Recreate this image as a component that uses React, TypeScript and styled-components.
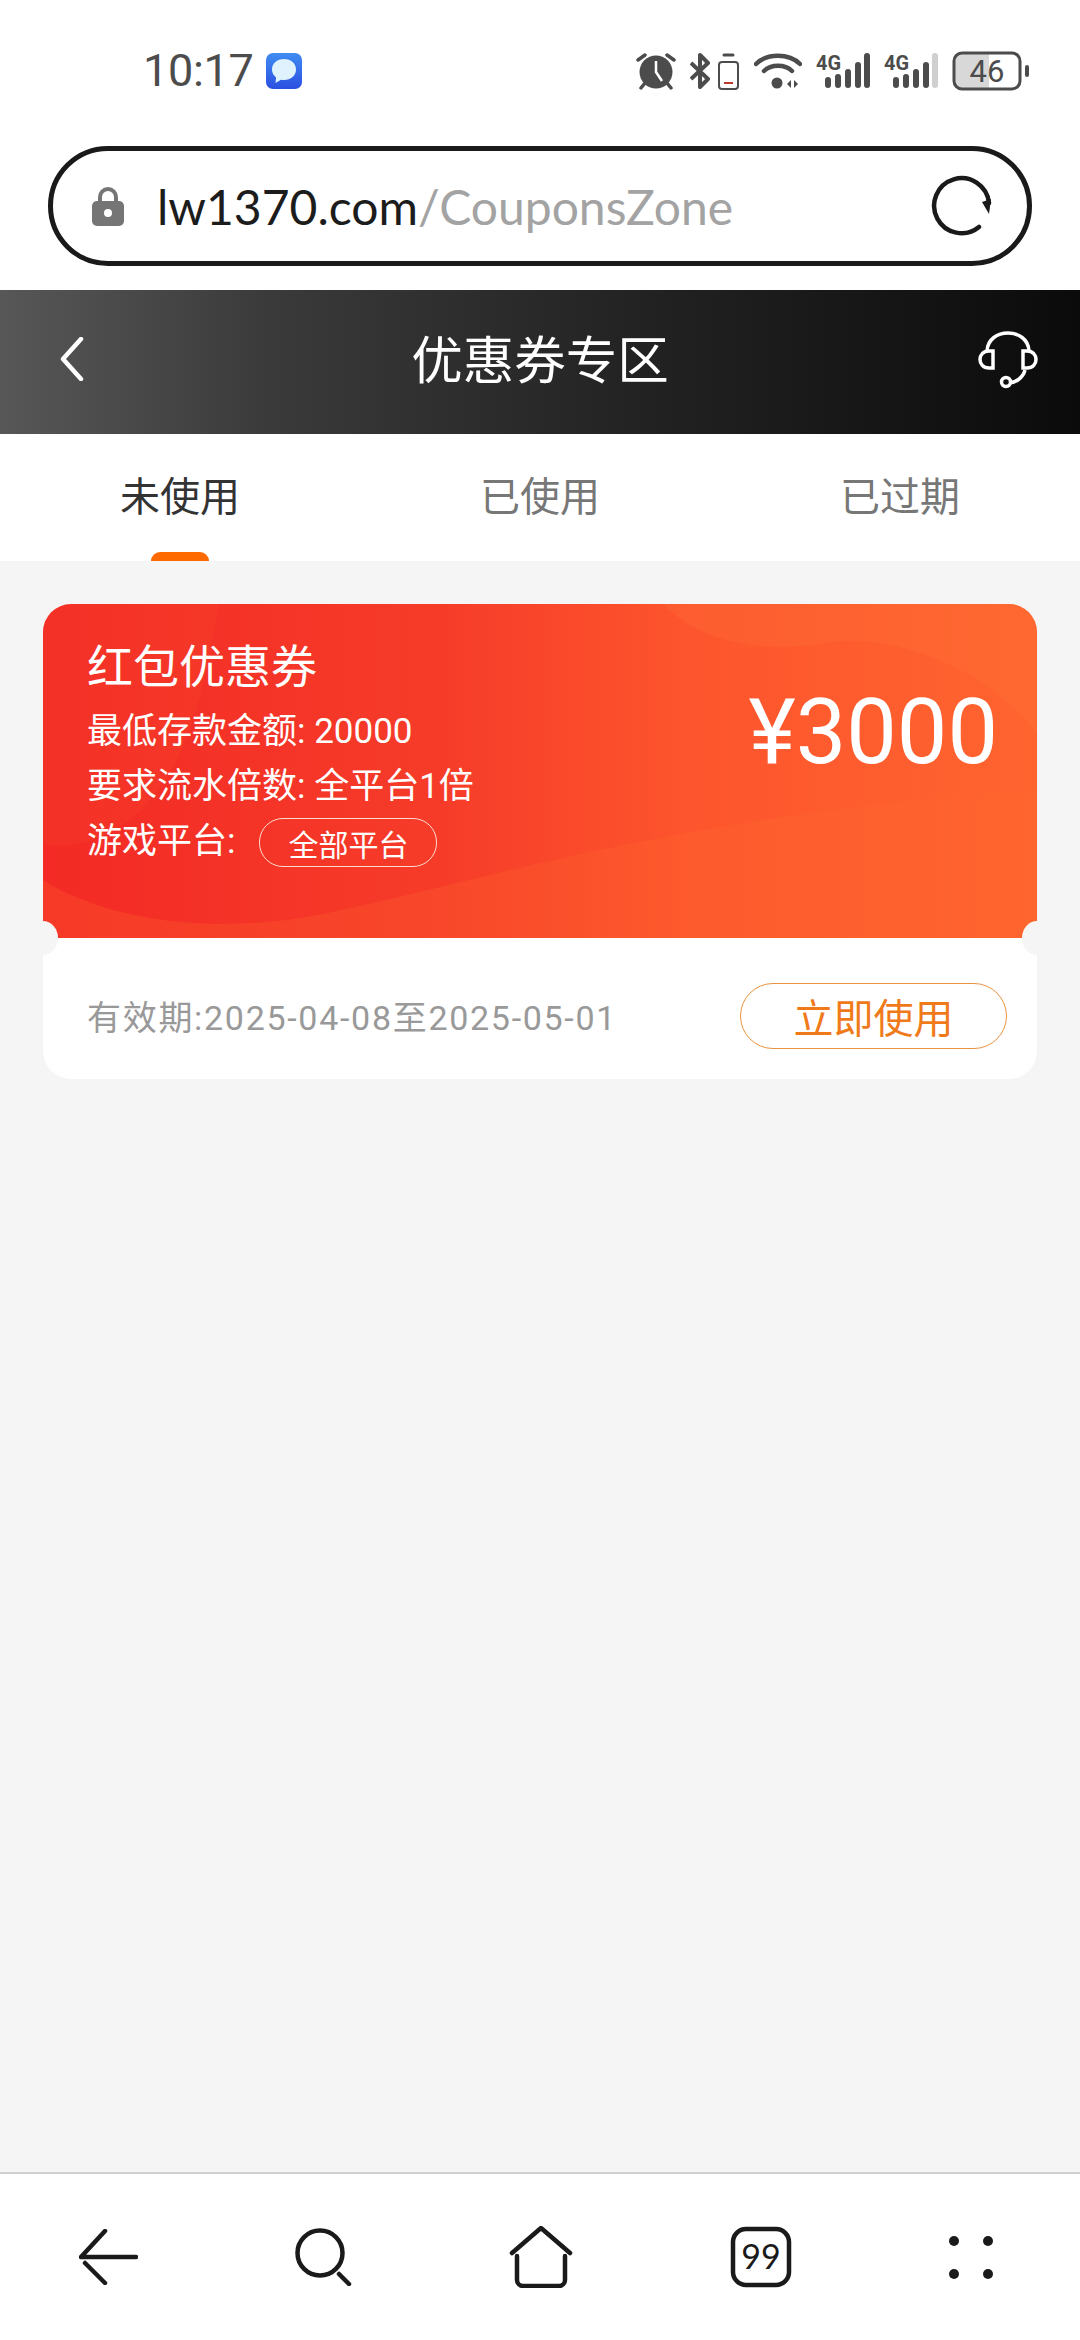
import React from "react"
import styled, { createGlobalStyle } from "styled-components"

const GlobalStyle = createGlobalStyle`
	html, body {
		margin: 0;
		padding: 0;
		background: #f5f5f5;
	}
	* {
		box-sizing: border-box;
	}
	body {
		font-family: Roboto, "Noto Sans CJK SC", sans-serif;
	}
`

const Page = styled.div`
	background: #f5f5f5;
	display: flex;
	flex-direction: column;
	height: 2340px;
	width: 1080px;
`

const TopArea = styled.div`
	background: #fff;
	height: 290px;
	padding: 0 50px 0 143px;
`

const StatusBar = styled.div`
	align-items: center;
	display: flex;
	height: 146px;
	justify-content: space-between;
	padding-bottom: 5px;
`

const TimeGroup = styled.div`
	align-items: center;
	color: #4c4c4c;
	display: flex;
	font-size: 45px;
	gap: 12px;
	letter-spacing: -0.3px;
`

const StatusIcons = styled.div`
	align-items: center;
	display: flex;
	gap: 14px;
`

const UrlBar = styled.div`
	align-items: center;
	background: #fff;
	border: 5px solid #1a1a1a;
	border-radius: 60px;
	display: flex;
	height: 120px;
	margin-left: -95px;
	padding: 0 34px 0 39px;
	width: 984px;
`

const UrlText = styled.div`
	color: #1c1c1c;
	flex: 1;
	font-family: Lato, Roboto, sans-serif;
	font-size: 48px;
	margin-left: 33px;

	span {
		color: #a3a3a3;
	}
`

const Header = styled.header`
	align-items: center;
	background: linear-gradient(90deg, #575757 0%, #3a3a3a 25%, #222 60%, #0b0b0b 100%);
	color: #fff;
	display: flex;
	height: 144px;
	justify-content: space-between;
	padding: 0 42px 6px 60px;
`

const HeaderTitle = styled.h1`
	font-size: 51.5px;
	font-weight: 400;
	margin: 0 0 6px 18px;
`

const Tabs = styled.nav`
	background: #fff;
	display: grid;
	grid-template-columns: repeat(3, 360px);
	height: 127px;
`

const Tab = styled.div<{ $active?: boolean }>`
	align-items: center;
	color: ${(p) => (p.$active ? "#333" : "#777")};
	display: flex;
	font-size: 40px;
	height: 100%;
	justify-content: center;
	padding-bottom: 8px;
	position: relative;

	&::after {
		background: #ff6a00;
		border-radius: 9px 9px 0 0;
		bottom: 0;
		content: "";
		display: ${(p) => (p.$active ? "block" : "none")};
		height: 9px;
		left: 151px;
		position: absolute;
		width: 58px;
	}
`

const Content = styled.main`
	flex: 1;
	padding: 43px 43px 0;
`

const Coupon = styled.section`
	background: #fff;
	border-radius: 28px;
	height: 475px;
	overflow: hidden;
	position: relative;

	&::before,
	&::after {
		background: #f5f5f5;
		border-radius: 50%;
		content: "";
		height: 34px;
		position: absolute;
		top: 317px;
		width: 30px;
		z-index: 2;
	}
	&::before {
		left: -15px;
	}
	&::after {
		right: -15px;
	}
`

const CouponTop = styled.div`
	align-items: flex-start;
	background: linear-gradient(90deg, #f32a25 0%, #f63c29 40%, #fd552d 65%, #ff642f 100%);
	color: #fff;
	display: flex;
	height: 334px;
	justify-content: space-between;
	padding: 35px 39px 0 44px;
	position: relative;
`

const Decor = styled.svg`
	inset: 0;
	position: absolute;
`

const CouponInfo = styled.div`
	position: relative;
`

const CouponTitle = styled.div`
	font-size: 46px;
	line-height: 56px;
	margin-bottom: 5px;
`

const InfoLine = styled.div`
	align-items: center;
	display: flex;
	font-size: 35px;
	height: 55px;
`

const PlatformPill = styled.span`
	align-items: center;
	border: 1px solid #ffd9cc;
	border-radius: 24px;
	display: flex;
	font-size: 30px;
	height: 49px;
	justify-content: center;
	margin: 10px 0 0 24px;
	width: 178px;
`

const Amount = styled.div`
	font-size: 90px;
	line-height: 100px;
	margin-top: 44px;
	position: relative;
`

const CouponBottom = styled.div`
	align-items: center;
	display: flex;
	height: 141px;
	justify-content: space-between;
	padding: 14px 30px 0 44px;
`

const Validity = styled.div`
	color: #999;
	font-size: 34px;
	letter-spacing: 1.7px;
`

const UseButton = styled.button`
	background: #fff;
	border: 1px solid #e8933f;
	border-radius: 33px;
	color: #f07a1a;
	font-family: inherit;
	font-size: 40px;
	height: 66px;
	padding: 0;
	width: 267px;
`

const BottomNav = styled.nav`
	align-items: center;
	background: #fff;
	border-top: 2px solid #d0d0d0;
	display: flex;
	height: 168px;
	justify-content: space-between;
	padding: 0 85px 0 79px;
`

const NavIcon = styled.svg`
	fill: none;
	stroke: #1a1a1a;
	stroke-linecap: round;
	stroke-linejoin: round;
	stroke-width: 4.5;
`

const ChatBadge = () => (
	<svg width="36" height="36" viewBox="0 0 36 36">
		<defs>
			<linearGradient id="chatBg" x1="0" y1="0" x2="0" y2="1">
				<stop offset="0" stopColor="#3f8cf2" />
				<stop offset="1" stopColor="#2b4fe0" />
			</linearGradient>
		</defs>
		<rect width="36" height="36" rx="7" fill="url(#chatBg)" />
		<path d="M18 6c7 0 12 4.500 12 10.500S25 27 18 27c-1 0-2-.1-3-.3L9.500 30l.6-5.500C7.500 22.500 6 19.700 6 16.500 6 10.500 11 6 18 6z" fill="#dff2fd" />
	</svg>
)

const AlarmIcon = () => (
	<svg width="40" height="38" viewBox="0 0 40 38">
		<circle cx="20" cy="20" r="16.500" fill="#4c4c4c" />
		<path d="M20 9v11l6 9" stroke="#fff" strokeWidth="2.500" fill="none" />
		<path d="M2 8l7-5M38 8l-7-5M5 36l4-5M35 36l-4-5" stroke="#4c4c4c" strokeWidth="3.500" strokeLinecap="round" fill="none" />
	</svg>
)

const BluetoothBatteryIcon = () => (
	<svg width="50" height="38" viewBox="0 0 50 38">
		<path d="M1 11l17 16-8 8V3l8 8L1 27" stroke="#4c4c4c" strokeWidth="4" fill="none" strokeLinejoin="round" />
		<path d="M34 3h9" stroke="#4c4c4c" strokeWidth="3" strokeLinecap="round" />
		<rect x="29" y="10" width="19" height="27" rx="3" stroke="#4c4c4c" strokeWidth="2" fill="none" />
		<path d="M34 31h9" stroke="#c0392b" strokeWidth="2" />
	</svg>
)

const WifiIcon = () => (
	<svg width="48" height="38" viewBox="0 0 48 38" fill="none">
		<path d="M2 12c11-11 33-11 44 0" stroke="#4c4c4c" strokeWidth="4.500" strokeLinecap="round" />
		<path d="M10 19c7-7 21-7 28 0" stroke="#4c4c4c" strokeWidth="4.500" strokeLinecap="round" />
		<circle cx="23" cy="31" r="5.500" fill="#4c4c4c" />
		<path d="M37 28l-4 4 4 4zM40 28l4 4-4 4z" fill="#4c4c4c" />
	</svg>
)

const SignalIcon = ({ dimLast }: { dimLast?: boolean }) => (
	<svg width="54" height="38" viewBox="0 0 54 38">
		<text x="0" y="18" fontFamily="Roboto, sans-serif" fontSize="20" fontWeight="700" fill="#4c4c4c" textLength="25" lengthAdjust="spacingAndGlyphs">4G</text>
		<rect x="9" y="25" width="6" height="11" rx="3" fill="#4c4c4c" />
		<rect x="19" y="22" width="6" height="14" rx="3" fill="#4c4c4c" />
		<rect x="29" y="17" width="6" height="19" rx="3" fill="#4c4c4c" />
		<rect x="39" y="10" width="6" height="26" rx="3" fill="#4c4c4c" />
		<rect x="48" y="1" width="6" height="35" rx="3" fill={dimLast ? "#cfcfcf" : "#4c4c4c"} />
	</svg>
)

const BatteryIcon = () => (
	<svg width="78" height="40" viewBox="0 0 78 40">
		<path d="M7 2h30v36H7a5 5 0 0 1-5-5V7a5 5 0 0 1 5-5z" fill="#d8d8d8" />
		<rect x="2" y="2" width="66" height="36" rx="8" stroke="#4c4c4c" strokeWidth="3" fill="none" />
		<rect x="73" y="14" width="4" height="12" rx="2" fill="#4c4c4c" />
		<text x="35" y="31" textAnchor="middle" fontFamily="Roboto, sans-serif" fontSize="31" fill="#4c4c4c">46</text>
	</svg>
)

const LockIcon = () => (
	<svg width="32" height="40" viewBox="0 0 32 40">
		<path d="M8 17v-6a8 8 0 0 1 16 0v6" stroke="#757575" strokeWidth="4" fill="none" />
		<rect x="0" y="15" width="32" height="25" rx="5" fill="#757575" />
		<circle cx="16" cy="27" r="4" fill="#fff" />
	</svg>
)

const ReloadIcon = () => (
	<svg width="62" height="62" viewBox="0 0 62 62" fill="none">
		<path d="M48 52A27.500 27.500 0 1 1 58 28" stroke="#1a1a1a" strokeWidth="4.500" strokeLinecap="round" />
		<path d="M51 27l9 -3-2 15z" fill="#1a1a1a" />
	</svg>
)

const BackIcon = () => (
	<svg width="24" height="44" viewBox="0 0 24 44" fill="none">
		<path d="M21 2L3 22l18 20" stroke="#fff" strokeWidth="4.500" strokeLinecap="round" strokeLinejoin="round" />
	</svg>
)

const HeadsetIcon = () => (
	<svg width="60" height="60" viewBox="0 0 60 60" fill="none" stroke="#fff" strokeWidth="3.500">
		<path d="M9 22C10 -2 50 -2 51 22" />
		<path d="M15 22v17H11C-1 39-1 22 11 22z" />
		<path d="M45 22v17h4C61 39 61 22 49 22z" />
		<path d="M47 41c-2 8-10 13-16 13" />
		<circle cx="28" cy="53" r="4.500" />
	</svg>
)

const CouponDecor = () => (
	<Decor width="994" height="334" viewBox="0 0 994 334">
		<path d="M0 0H176C162 70 150 190 60 232C34 242 14 244 0 240z" fill="#ff5b34" opacity="0.14" />
		<path d="M620 0C660 40 720 50 790 38C860 30 950 70 994 130V0z" fill="#ff7a3a" opacity="0.22" />
		<path d="M0 276C70 320 180 330 280 310C460 272 640 210 994 186V334H0z" fill="#ff6a30" opacity="0.26" />
	</Decor>
)

const App = () => {
	return (
		<Page>
			<GlobalStyle />
			<TopArea>
				<StatusBar>
					<TimeGroup>
						10:17
						<ChatBadge />
					</TimeGroup>
					<StatusIcons>
						<AlarmIcon />
						<BluetoothBatteryIcon />
						<WifiIcon />
						<SignalIcon />
						<SignalIcon dimLast />
						<BatteryIcon />
					</StatusIcons>
				</StatusBar>
				<UrlBar>
					<LockIcon />
					<UrlText>
						lw1370.com<span>/CouponsZone</span>
					</UrlText>
					<ReloadIcon />
				</UrlBar>
			</TopArea>
			<Header>
				<BackIcon />
				<HeaderTitle>优惠券专区</HeaderTitle>
				<HeadsetIcon />
			</Header>
			<Tabs>
				<Tab $active>未使用</Tab>
				<Tab>已使用</Tab>
				<Tab>已过期</Tab>
			</Tabs>
			<Content>
				<Coupon>
					<CouponTop>
						<CouponDecor />
						<CouponInfo>
							<CouponTitle>红包优惠券</CouponTitle>
							<InfoLine>最低存款金额: 20000</InfoLine>
							<InfoLine>要求流水倍数: 全平台1倍</InfoLine>
							<InfoLine>
								游戏平台:
								<PlatformPill>全部平台</PlatformPill>
							</InfoLine>
						</CouponInfo>
						<Amount>¥3000</Amount>
					</CouponTop>
					<CouponBottom>
						<Validity>有效期:2025-04-08至2025-05-01</Validity>
						<UseButton>立即使用</UseButton>
					</CouponBottom>
				</Coupon>
			</Content>
			<BottomNav>
				<NavIcon width="59" height="56" viewBox="0 0 59 56">
					<path d="M26 2L2 28h55" />
					<path d="M6 34l20 20" />
				</NavIcon>
				<NavIcon width="57" height="58" viewBox="0 0 57 58">
					<circle cx="25" cy="25" r="22.500" />
					<path d="M44 46l10 10" />
				</NavIcon>
				<NavIcon width="64" height="62" viewBox="0 0 64 62">
					<path d="M3 27L32 2l29 25" />
					<path d="M8 30v24a6 6 0 0 0 6 6h36a6 6 0 0 0 6-6V30" />
				</NavIcon>
				<NavIcon width="62" height="62" viewBox="0 0 62 62">
					<rect x="3" y="3" width="56" height="56" rx="13" />
					<text x="31" y="43" textAnchor="middle" fontFamily="Lato, Roboto, sans-serif" fontSize="34" fill="#1a1a1a" stroke="none">99</text>
				</NavIcon>
				<NavIcon width="46" height="44" viewBox="0 0 46 44">
					<g fill="#1a1a1a" stroke="none">
						<circle cx="5" cy="6" r="5" />
						<circle cx="39" cy="6" r="5" />
						<circle cx="5" cy="39" r="5" />
						<circle cx="39" cy="39" r="5" />
					</g>
				</NavIcon>
			</BottomNav>
		</Page>
	)
}

export default App
